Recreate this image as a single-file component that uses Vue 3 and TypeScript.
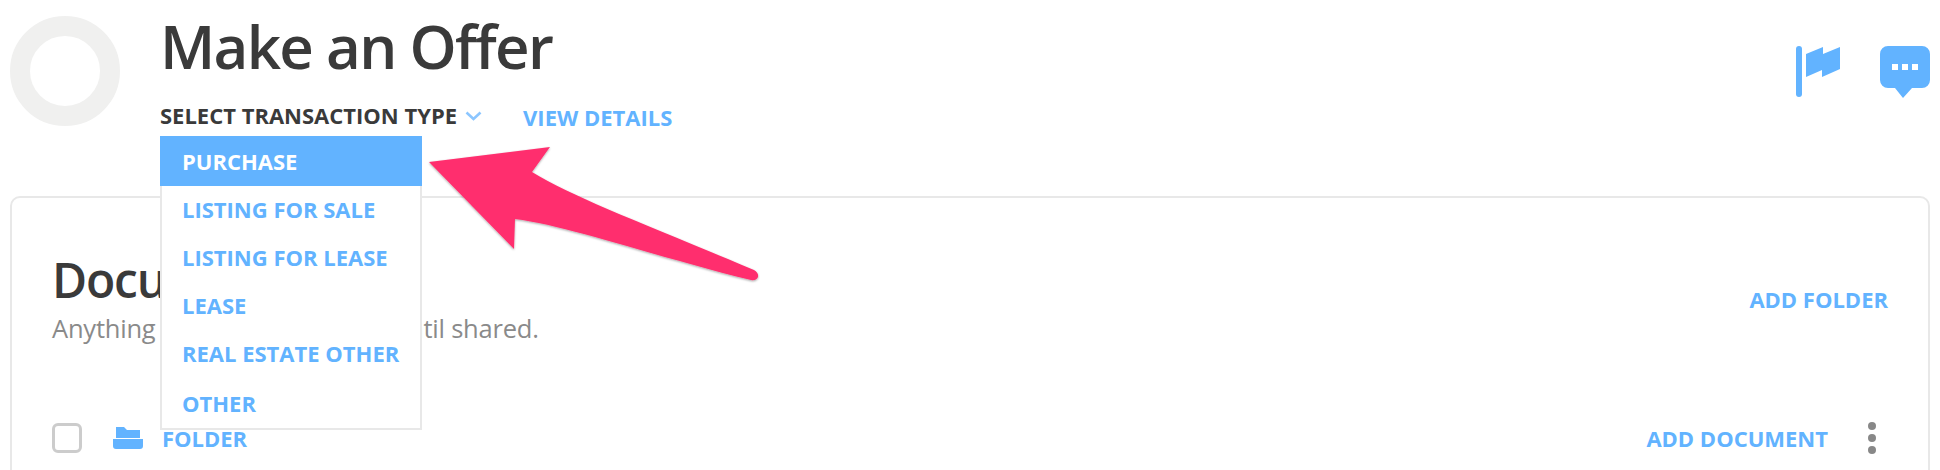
<script setup lang="ts">
const options: string[] = ['Purchase', 'Listing for Sale', 'Listing for Lease', 'Lease', 'Real Estate Other', 'Other']
</script>

<template>
  <div class="page">
    <header class="head">
      <div class="avatar"></div>
      <div class="head-main">
        <h1 class="title">Make an Offer</h1>
        <div class="sub">
          <button class="select">
            <span>SELECT TRANSACTION TYPE</span>
            <svg class="chev" width="17" height="10" viewBox="0 0 17 10"><path d="M1.5 1.5 8.5 8 15.5 1.5" fill="none" stroke="#8cc6ff" stroke-width="2.6"/></svg>
          </button>
          <a class="link details">VIEW DETAILS</a>
        </div>
        <ul class="menu">
          <li v-for="(o, i) in options" :key="o" class="item" :class="{ active: i === 0 }">{{ o }}</li>
        </ul>
      </div>
      <div class="actions">
        <svg width="46" height="52" viewBox="0 0 46 52"><rect x="0" y="0" width="6" height="51" rx="3" fill="#62b3ff"/><path d="M10 8 27 1V8L44 1V23L26 31V24L10 31Z" fill="#62b3ff"/></svg>
        <svg width="50" height="52" viewBox="0 0 50 52"><path d="M8 0H42A8 8 0 0 1 50 8V34A8 8 0 0 1 42 42H32L23 52 15 42H8A8 8 0 0 1 0 34V8A8 8 0 0 1 8 0Z" fill="#62b3ff"/><rect x="12" y="18" width="6" height="6" fill="#fff"/><rect x="22" y="18" width="6" height="6" fill="#fff"/><rect x="32" y="18" width="6" height="6" fill="#fff"/></svg>
      </div>
    </header>
    <section class="card">
      <div class="card-top">
        <div>
          <h2 class="card-title">Documents</h2>
          <p class="card-sub">Anything in this file is private until shared.</p>
        </div>
        <a class="link">ADD FOLDER</a>
      </div>
      <div class="row">
        <span class="check"></span>
        <svg class="folder" width="30" height="22" viewBox="0 0 30 22"><path d="M3 0H11L14 3H27V11H3ZM0 12H30V19Q30 22 27 22H3Q0 22 0 19Z" fill="#62b3ff"/></svg>
        <a class="link folder-name">FOLDER</a>
        <a class="link add-doc">ADD DOCUMENT</a>
        <span class="more"><i></i><i></i><i></i></span>
      </div>
    </section>
    <svg class="arrow" width="350" height="150" viewBox="420 140 350 150">
      <defs><filter id="sh" x="-5%" y="-5%" width="110%" height="115%"><feDropShadow dx="0" dy="1" stdDeviation="1" flood-color="#000" flood-opacity=".35"/></filter></defs>
      <path filter="url(#sh)" fill="#ff2f6e" d="M429 162 550 147 532 172C575 198 640 222 754 270Q759 273 758 277 756 281 751 280C660 258 570 226 515 219L514 249Z"/>
    </svg>
  </div>
</template>

<style scoped>
.page { position: relative; width: 1940px; height: 470px; overflow: hidden; background: #fff; font-family: "Open Sans", sans-serif; color: #3a3a3a; }
.head { display: flex; height: 196px; padding: 16px 10px 0; box-sizing: border-box; }
.avatar { width: 110px; height: 110px; box-sizing: border-box; border: 20px solid #f0f0ef; border-radius: 50%; flex: none; }
.head-main { position: relative; margin-left: 40px; flex: 1; }
.title { margin: 0; font-size: 60px; line-height: 60px; font-weight: 600; letter-spacing: -1.7px; }
.sub { display: flex; align-items: center; margin-top: 25px; }
.select { display: flex; align-items: center; gap: 8px; padding: 0; border: 0; background: none; font: 700 22px/24px "Open Sans", sans-serif; color: #3a3a3a; }
.chev { margin-top: 2px; }
.link { font-size: 22px; line-height: 24px; font-weight: 700; color: #62b3ff; white-space: nowrap; }
.details { margin-left: 41px; margin-top: 4px; }
.menu { position: absolute; z-index: 2; left: 0; top: 120px; width: 262px; box-sizing: border-box; margin: 0; padding: 0; list-style: none; background: #fff; border: 2px solid #e8e8e8; border-top: 0; }
.item { height: 48px; padding: 0 20px; margin: 0 -2px 0 0; font-size: 22px; line-height: 46px; font-weight: 700; color: #62b3ff; text-transform: uppercase; white-space: nowrap; }
.item.active { height: 50px; margin: 0 -2px; padding: 0 22px; background: #62b3ff; color: #fff; line-height: 51px; }
.item:last-child { height: 50px; line-height: 50px; }
.actions { display: flex; gap: 38px; padding-top: 30px; align-items: flex-start; }
.card { margin: 0 10px; height: 400px; box-sizing: border-box; border: 2px solid #e8e8e8; border-radius: 10px; padding: 54px 40px 0 40px; }
.card-top { display: flex; justify-content: space-between; align-items: flex-start; }
.card-title { margin: 0; font-size: 48px; line-height: 56px; font-weight: 600; letter-spacing: -1.2px; }
.card-sub { margin: 5px 0 0; font-size: 25.5px; line-height: 30px; color: #8a8a8a; letter-spacing: -0.21px; }
.card-top .link { margin-top: 35px; }
.row { display: flex; align-items: center; margin-top: 79px; }
.check { width: 30px; height: 30px; box-sizing: border-box; border: 3px solid #ccc; border-radius: 6px; flex: none; }
.folder { margin-left: 31px; }
.folder-name { margin-left: 19px; }
.add-doc { margin-left: auto; }
.more { display: flex; flex-direction: column; gap: 4px; margin-left: 40px; margin-right: 12px; }
.more i { display: block; width: 8px; height: 8px; border-radius: 50%; background: #888; }
.arrow { position: absolute; z-index: 3; left: 420px; top: 140px; }
</style>
